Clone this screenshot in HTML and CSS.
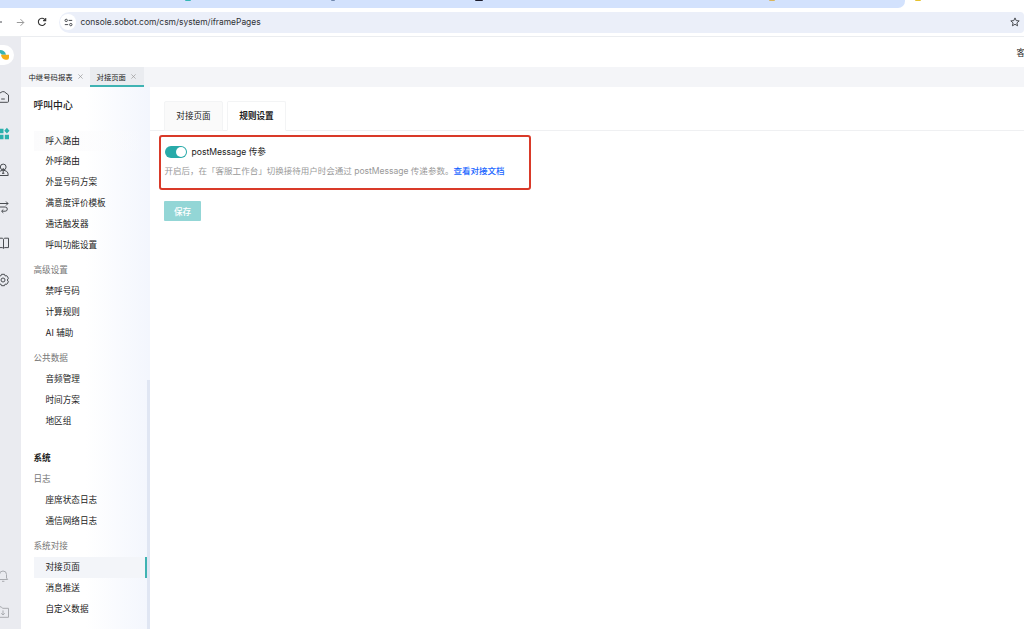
FILE: index.html
```
<!DOCTYPE html>
<html lang="zh-CN">
<head>
    <meta charset="UTF-8">
    <meta name="viewport" content="width=device-width, initial-scale=1.0">
    <title>对接页面</title>

    <link rel="stylesheet" href="styles.css">

</head>
<body>

    <!--  浏览器  -->

    <div class="strip">
        <div class="strip-active">
            <i class="fav teal"></i>
            <i class="fav gray"></i>
            <i class="fav dark"></i>
            <i class="fav gold"></i>
        </div>
        <i class="fav yellow"></i>
    </div>

    <div class="toolbar">
        <svg class="nav-back" width="5" height="12" viewBox="0 0 5 12"><path d="M0 6h2"/></svg>
        <svg class="nav-next" width="9" height="9" viewBox="0 0 9 9"><path d="M.8 4.5h7M4.5 1.2l3.3 3.3-3.3 3.3"/></svg>
        <svg class="nav-reload" width="10" height="10" viewBox="0 0 10 10"><path d="M8.4 6A3.6 3.6 0 1 1 7.6 2.4L8.5 3.4"/><path d="M8.7 1v2.6H6.1"/></svg>
        <div class="address">
            <span class="site">
                <svg width="9" height="9" viewBox="0 0 9 9"><circle cx="2.2" cy="2.4" r="1.2"/><path d="M4.6 2.4h3.6M.8 6.6h3.4"/><circle cx="6.8" cy="6.6" r="1.2"/></svg>
            </span>
            <span class="url">console.sobot.com/csm/system/iframePages</span>
            <svg class="star" width="10" height="10" viewBox="0 0 10 10"><path d="M5 .9l1.2 2.7 3 .3-2.3 2 .7 2.9L5 7.300 2.400 8.800l.7-2.900-2.300-2 3-.3z"/></svg>
        </div>
    </div>

    <div class="app">

        <!--  左侧图标栏  -->

        <div class="rail">
            <div class="logo">
                <svg width="14" height="20" viewBox="0 0 14 20"><path class="logo-teal" d="M0 5c3.200 0 5.500 1.600 6 4.800H2L0 8z"/><path class="logo-gold" d="M1 9.800h8v2.700q0 2.300-2 2.300H5.500C3 14.800 1.400 12.500 1 9.800z"/></svg>
            </div>
            <svg class="icon" width="10" height="14" viewBox="0 0 10 14"><path d="M-4 5.400L2.200 1.700h2L8.500 5v6.300q0 1-1 1H-4M1.200 9h3.600"/></svg>
            <svg class="icon on" width="10" height="14" viewBox="0 0 10 14"><path d="M-1 1.700h4.500v4.600H-1zM-1 7.700h4.500v4.600H-1zM4.800 7.700H9v4.600H4.800zM6.900.8l2.600 2.900-2.600 2.900-2.600-2.900z"/></svg>
            <svg class="icon" width="10" height="14" viewBox="0 0 10 14"><circle cx="3.200" cy="4" r="2.900"/><path d="M0 8.200L3.200 7l3.400 1.300Q8.400 9.500 8.200 12.500H-2M3.200 5v5.500M2 10.300h2.400"/></svg>
            <svg class="icon" width="10" height="14" viewBox="0 0 10 14"><path d="M0 3.500h8M6 1.500l2 2-2 2M0 7h5.200a1.800 1.800 0 0 1 0 4.200H2M3.300 9.500L1.500 11.200l1.800 1.700"/></svg>
            <svg class="icon" width="10" height="14" viewBox="0 0 10 14"><path d="M-2 2.200h4.300l1.200 1 1.200-1h3.800v9.400H4.700l-1.200.8-1.200-.8H-2M3.500 3.200v9"/></svg>
            <svg class="icon" width="10" height="14" viewBox="0 0 10 14"><circle cx="3" cy="7" r="2"/><path d="M1.500 1.300h3l.6 1.600 1.700-.2L8.400 5.200 7.300 7l1.100 1.800-1.600 2.500-1.700-.2-.6 1.600h-3L.9 11.100l-1.700.2M1.500 1.300L.9 2.900-.8 2.700"/></svg>
            <div class="rail-foot">
                <svg class="icon pale" width="10" height="14" viewBox="0 0 10 14"><path d="M-1 10.500h8.700L6.500 9V5.500a3.500 3.500 0 0 0-7 0M2 12.300h2.400"/></svg>
                <svg class="icon pale" width="10" height="14" viewBox="0 0 10 14"><path d="M-1 1.800h2.200l1.300 1.500h6v9H-1M3 5.400v4.500M1.200 8.300L3 10l1.800-1.700"/></svg>
            </div>
        </div>

        <div class="main">
            <div class="header"><span>客</span></div>

            <div class="tabs">
                <div class="tab">中继号码报表<svg width="5" height="5" viewBox="0 0 5 5"><path d="M.4.4l4.200 4.200M4.600.4L.4 4.600"/></svg></div>
                <div class="tab current">对接页面<svg width="5" height="5" viewBox="0 0 5 5"><path d="M.4.4l4.200 4.200M4.600.4L.4 4.600"/></svg></div>
            </div>

            <div class="body">

                <!--  菜单  -->

                <div class="menu">
                    <h2>呼叫中心</h2>
                    <ul>
                        <li class="hover">呼入路由</li>
                        <li>外呼路由</li>
                        <li>外显号码方案</li>
                        <li>满意度评价模板</li>
                        <li>通话触发器</li>
                        <li>呼叫功能设置</li>
                    </ul>
                    <h4>高级设置</h4>
                    <ul>
                        <li>禁呼号码</li>
                        <li>计算规则</li>
                        <li>AI 辅助</li>
                    </ul>
                    <h4>公共数据</h4>
                    <ul>
                        <li>音频管理</li>
                        <li>时间方案</li>
                        <li>地区组</li>
                    </ul>
                    <h3>系统</h3>
                    <h4 class="first">日志</h4>
                    <ul>
                        <li>座席状态日志</li>
                        <li>通信网络日志</li>
                    </ul>
                    <h4>系统对接</h4>
                    <ul>
                        <li class="selected">对接页面</li>
                        <li>消息推送</li>
                        <li>自定义数据</li>
                    </ul>
                    <div class="scrollbar"></div>
                </div>

                <!--  内容  -->

                <div class="content">
                    <div class="cards">
                        <div class="card">对接页面</div>
                        <div class="card open">规则设置</div>
                    </div>

                    <div class="setting">
                        <div class="row">
                            <span class="switch"></span>
                            <span>postMessage 传参</span>
                        </div>
                        <p class="tip">开启后，在「客服工作台」切换接待用户时会通过 postMessage 传递参数。<a>查看对接文档</a></p>
                    </div>

                    <button class="save">保存</button>
                </div>
            </div>
        </div>
    </div>

</body>
</html>
```
FILE: styles.css
```
* {
    margin: 0;
    padding: 0;
    box-sizing: border-box;
}

body {
    width: 1024px;
    height: 629px;
    overflow: hidden;
    display: flex;
    flex-direction: column;
    font-family: Inter, "Noto Sans CJK SC", sans-serif;
    font-size: 8.6px;
    color: #222;
    background-color: #fff;
}

svg {
    display: block;
    flex-shrink: 0;
    fill: none;
    stroke: #4a4d52;
    stroke-width: 1;
}

ul {
    list-style: none;
}

/* browser */

.strip {
    display: flex;
    height: 8px;
    flex-shrink: 0;
}
.strip-active {
    display: flex;
    width: 905px;
    background-color: #d3e2fd;
    border-radius: 0 0 7px 0;
}
.fav {
    width: 6px;
    height: 1px;
    border-radius: 0 0 3px 3px;
}
.fav.teal {
    margin-left: 185px;
    background-color: #35b6b4;
}
.fav.gray {
    width: 4px;
    margin-left: 140px;
    background-color: #7188ad;
}
.fav.dark {
    width: 8px;
    margin-left: 140px;
    background-color: #1c1c2c;
}
.fav.gold {
    margin-left: 286px;
    background-color: #d9b55c;
}
.fav.yellow {
    margin-left: 10px;
    background-color: #e6c22e;
}

.toolbar {
    display: flex;
    align-items: center;
    height: 29px;
    flex-shrink: 0;
    border-bottom: 1px solid #ebedf0;
}
.nav-next {
    margin-left: 11px;
    stroke: #999;
}
.nav-reload {
    margin-left: 12px;
    stroke: #333;
    stroke-width: 1.1;
}
.address {
    display: flex;
    align-items: center;
    flex: 1;
    height: 21px;
    margin-left: 12px;
    padding-left: 1px;
    background-color: #ebeff9;
    border-radius: 11px 4px 4px 11px;
}
.site {
    display: flex;
    align-items: center;
    justify-content: center;
    width: 16px;
    height: 16px;
    border-radius: 50%;
    background-color: #fff;
}
.url {
    margin-left: 4.5px;
    font-size: 8.43px;
    color: #303236;
}
.star {
    margin-left: auto;
    margin-right: 4px;
}

/* icon rail */

.app {
    display: flex;
    flex: 1;
    min-height: 0;
}
.rail {
    display: flex;
    flex-direction: column;
    width: 21px;
    background-color: #eaebf0;
}
.logo {
    width: 14px;
    height: 20px;
    margin-top: 8px;
    margin-bottom: 25px;
    border-radius: 0 10px 10px 0;
    background-color: #fff;
}
.logo svg {
    stroke: none;
}
.logo .logo-teal {
    fill: #37b3b3;
}
.logo .logo-gold {
    fill: #f5ae16;
}
.icon {
    margin-bottom: 22.6px;
}
.icon.on {
    fill: #2bb0ac;
    stroke: none;
}
.icon.pale {
    stroke: #a9abb0;
}
.rail-foot {
    margin-top: auto;
    margin-bottom: -13px;
}

.main {
    display: flex;
    flex-direction: column;
    flex: 1;
    min-width: 0;
}
.header {
    display: flex;
    align-items: center;
    height: 30px;
    padding-left: 995.5px;
    overflow: hidden;
}

/* page tabs */

.tabs {
    display: flex;
    height: 20px;
    background-color: #f4f5f8;
}
.tab {
    display: flex;
    align-items: center;
    padding: 0 7px 2px 7.5px;
    font-size: 7.35px;
}
.tab svg {
    margin-left: 5px;
    stroke: #999;
    stroke-width: .7;
}
.tab.current {
    width: 54px;
    padding: 0 0 0 7px;
    background-color: #eaecf0;
    border-bottom: 2px solid #3fb3b3;
}

.body {
    display: flex;
    flex: 1;
    min-height: 0;
}

/* menu */

.menu {
    position: relative;
    width: 129px;
    padding: 9px 4px 0 12.500px;
    background-image: linear-gradient(90deg, #fff 50%, #f3f6fd);
}
.menu h2 {
    height: 34.6px;
    font-size: 9.8px;
    font-weight: 500;
    line-height: 20px;
}
.menu h3,
.menu h4,
.menu li {
    height: 20.8px;
    font-size: 8.6px;
    line-height: 20.8px;
    white-space: nowrap;
}
.menu h3 {
    margin-top: 17px;
    font-weight: 700;
}
.menu h4 {
    margin-top: 4.8px;
    font-weight: 400;
    color: #777;
}
.menu h4.first {
    margin-top: 0;
}
.menu li {
    padding-left: 12px;
}
.menu li.hover {
    background-image: linear-gradient(90deg, #fbfbfc, transparent);
}
.menu li.selected {
    margin-right: -1px;
    background-color: #f3f5f9;
    border-right: 2px solid #3fb3b3;
}
.scrollbar {
    position: absolute;
    right: 0;
    bottom: 0;
    width: 3px;
    height: 249px;
    background-color: #e0e6f3;
}

/* content */

.content {
    flex: 1;
    padding-top: 14px;
}
.cards {
    display: flex;
    gap: 4px;
    height: 30px;
    padding-left: 14px;
    border-bottom: 1px solid #eff0f2;
}
.card {
    width: 59px;
    height: 30px;
    line-height: 29px;
    text-align: center;
    border: 1px solid #f3f4f5;
    border-radius: 2px 2px 0 0;
    background-color: #fafafa;
}
.card.open {
    font-weight: 700;
    background-color: #fff;
    border-bottom-color: #fff;
}

.setting {
    width: 372px;
    height: 55px;
    margin: 4px 0 0 9px;
    padding: 7px 0 0 3.500px;
    border: 2px solid #d93a29;
    border-radius: 3px;
}
.row {
    display: flex;
    align-items: center;
    gap: 5px;
    height: 14px;
}
.switch {
    display: flex;
    justify-content: flex-end;
    width: 22px;
    height: 12px;
    padding: 1px;
    margin-top: 2px;
    border-radius: 6px;
    background-color: #28aaa9;
}
.switch::after {
    content: "";
    width: 10px;
    height: 10px;
    border-radius: 50%;
    background-color: #fff;
}
.tip {
    margin-top: 5.500px;
    font-size: 8.53px;
    line-height: 14px;
    white-space: nowrap;
    color: #999;
}
.tip a {
    font-weight: 500;
    color: #1664ff;
}

.save {
    display: block;
    width: 37px;
    height: 20px;
    margin: 11px 0 0 14px;
    border: 0;
    border-radius: 1px;
    font: inherit;
    font-weight: 500;
    color: #fff;
    background-color: #93d6d6;
}
```
